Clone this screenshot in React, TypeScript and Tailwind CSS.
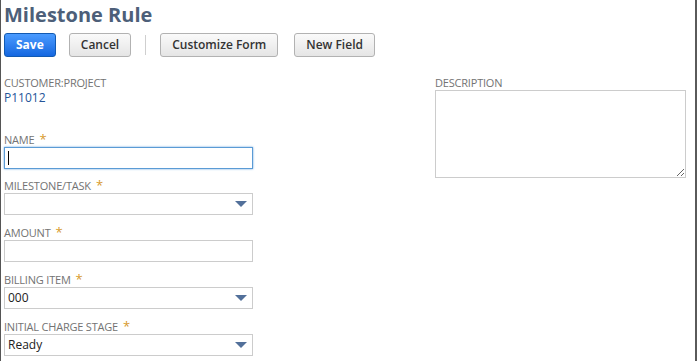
import React from 'react';

const font = { fontFamily: '"Open Sans", "Noto Sans", Arial, sans-serif' };

function Label({ text, req }: { text: string; req?: boolean }) {
  return (
    <div className="text-[11px] leading-[13px] text-[#737373] uppercase tracking-[-0.2px] h-[13px] flex items-start">
      {text}
      {req && <span className="text-[#d79a2c] ml-[5px] text-[13px] leading-[13px]">*</span>}
    </div>
  );
}

function Caret() {
  return (
    <svg width="12" height="6" viewBox="0 0 12 6" className="mr-[5px]">
      <path d="M0 0 H12 L6 6 Z" fill="#52709a" />
    </svg>
  );
}

function SelectBox({ value }: { value?: string }) {
  return (
    <div className="w-[249px] h-[22px] border border-[#cccccc] bg-white flex items-center justify-between">
      <span className="text-[12px] text-[#222] pl-[3px]">{value}</span>
      <Caret />
    </div>
  );
}

function TextBox({ focused }: { focused?: boolean }) {
  return (
    <div
      className={
        focused
          ? 'w-[249px] h-[22px] border border-[#5b9bd5] shadow-[0_0_2px_#6aa6e0] bg-white flex items-center'
          : 'w-[249px] h-[22px] border border-[#cccccc] bg-white'
      }
    >
      {focused && <div className="w-px h-[14px] bg-black ml-[3px]" />}
    </div>
  );
}

function Btn({ label, primary }: { label: string; primary?: boolean }) {
  return (
    <button
      className={
        primary
          ? 'h-[24px] px-[11px] rounded-[3px] border border-[#125ab2] bg-gradient-to-b from-[#4a9bff] to-[#1467e0] text-white text-[12px] font-bold'
          : 'h-[24px] px-[11px] rounded-[3px] border border-[#b2b2b2] bg-gradient-to-b from-[#fafafa] to-[#e5e5e5] text-[#333] text-[12px] font-semibold'
      }
    >
      {label}
    </button>
  );
}

function Field({ text, mt, children }: { text: string; mt: string; children: React.ReactNode }) {
  return (
    <div className={mt}>
      <Label text={text} req />
      <div className="mt-[1px]">{children}</div>
    </div>
  );
}

export default function App() {
  return (
    <div className="w-[697px] h-[361px] bg-white relative overflow-hidden border-l border-[#555] border-r-2 border-r-[#5a5a5a]" style={font}>
      <div className="pl-[3px] pt-[2px]">
        <h1 className="text-[20px] leading-[26px] font-bold text-[#4d5f79]">Milestone Rule</h1>
        <div className="flex items-center mt-[5px]">
          <Btn label="Save" primary />
          <div className="w-[13px]" />
          <Btn label="Cancel" />
          <div className="w-px h-[20px] bg-[#cfcfcf] mx-[14px]" />
          <Btn label="Customize Form" />
          <div className="w-[16px]" />
          <Btn label="New Field" />
        </div>
        <div className="flex mt-[19px]">
          <div className="w-[431px]">
            <Label text="Customer:Project" />
            <div className="text-[12px] leading-[16px] mt-[1px] text-[#255599]">P11012</div>
            <Field text="Name" mt="mt-[27px]"><TextBox focused /></Field>
            <Field text="Milestone/Task" mt="mt-[10px]"><SelectBox /></Field>
            <Field text="Amount" mt="mt-[11px]"><TextBox /></Field>
            <Field text="Billing Item" mt="mt-[11px]"><SelectBox value="000" /></Field>
            <Field text="Initial Charge Stage" mt="mt-[11px]"><SelectBox value="Ready" /></Field>
          </div>
          <div>
            <Label text="Description" />
            <textarea className="mt-[1px] w-[251px] h-[88px] border border-[#cccccc] resize block outline-none" />
          </div>
        </div>
      </div>
    </div>
  );
}
